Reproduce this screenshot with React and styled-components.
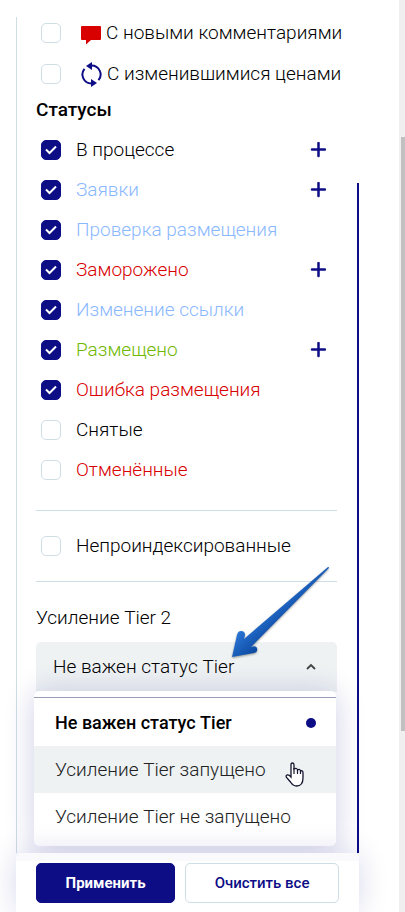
import { useState } from "react";
import styled, { createGlobalStyle } from "styled-components";

const NAVY = "#0d0d86";
const LINE = "#cfdde5";

const GlobalStyle = createGlobalStyle`
  * {
    box-sizing: border-box;
  }

  body {
    margin: 0;
    background: #ffffff;
    color: #000000;
    font-family: Roboto, "Liberation Sans", sans-serif;
    font-size: 19px;
    font-weight: 300;
    line-height: 24px;
  }

  button, select {
    font: inherit;
    color: inherit;
    cursor: pointer;
  }
`;

const Page = styled.div`
  display: flex;
  min-height: 100vh;
  overflow: hidden;
`;

const Sidebar = styled.aside`
  flex: 1;
  display: flex;
  flex-direction: column;
  min-width: 0;
  padding: 17px 40px 0 16px;
`;

const Panel = styled.div`
  flex: 1;
  display: flex;
  border-left: 1px solid ${LINE};
`;

const Filters = styled.form`
  flex: 1;
  min-width: 0;
  padding: 0 20px 0 19px;
`;

const PanelThumb = styled.div`
  width: 2px;
  margin-top: 166px;
  background: ${NAVY};
`;

const PageScroll = styled.div`
  width: 6px;
  padding-top: 137px;
  padding-left: 2px;
  background: #f0f0f0;
`;

const PageThumb = styled.div`
  height: 594px;
  background: #c1c1c1;
`;

const FlagList = styled.div`
  display: flex;
  flex-direction: column;
  gap: 9px;
`;

const Row = styled.div`
  display: flex;
  align-items: center;
  justify-content: space-between;
  height: ${(props) => (props.$compact ? "32px" : "40px")};
  padding: 0 11px 0 5px;
`;

const RowLabel = styled.label`
  display: flex;
  align-items: center;
  gap: ${(props) => (props.$wide ? "20px" : "15px")};
  color: ${(props) => props.$color || "#000000"};
  white-space: nowrap;
  cursor: pointer;
`;

const IconText = styled.span`
  display: flex;
  align-items: center;
  gap: 5px;
`;

const Tick = styled.span`
  display: grid;
  place-items: center;

  > * {
    grid-area: 1 / 1;
  }

  svg {
    pointer-events: none;
  }
`;

const TickInput = styled.input`
  appearance: none;
  width: 20px;
  height: 20px;
  margin: 0;
  border: 1px solid ${LINE};
  border-radius: 5px;
  background: #ffffff;
  cursor: pointer;

  &:checked {
    border-color: ${NAVY};
    background: ${NAVY};
  }
`;

const ExpandButton = styled.button`
  display: flex;
  padding: 0;
  border: 0;
  background: none;
`;

const Heading = styled.h2`
  margin: 8px 0;
  font-size: 19px;
  font-weight: 500;
  line-height: 24px;
`;

const Divider = styled.hr`
  height: 1px;
  margin: ${(props) => props.$top} 0 0;
  border: 0;
  background: ${LINE};
`;

const IndexBlock = styled.div`
  padding-top: 15px;
`;

const TierField = styled.div`
  position: relative;
  margin-top: 24px;
`;

const FieldLabel = styled.label`
  display: block;
  margin-bottom: 12px;
`;

const SelectBox = styled.div`
  display: grid;
  align-items: center;

  > * {
    grid-area: 1 / 1;
  }

  svg {
    justify-self: end;
    margin-right: 20px;
    pointer-events: none;
  }
`;

const Select = styled.select`
  appearance: none;
  width: 100%;
  height: 50px;
  padding: 0 40px 0 17px;
  border: 0;
  border-radius: 5px 5px 0 0;
  background: #eef2f3;
  outline: none;
`;

const Menu = styled.div`
  position: absolute;
  top: 85px;
  left: -2px;
  right: 1px;
  padding: 6px 0;
  border-radius: 5px;
  background: #ffffff;
  box-shadow: 0 2px 30px rgba(13, 13, 134, 0.2);
`;

const MenuLine = styled.div`
  height: 1px;
  margin-bottom: 1px;
  background: #999db5;
`;

const Option = styled.button`
  display: flex;
  align-items: center;
  justify-content: space-between;
  width: 100%;
  height: 47px;
  padding: 0 20px 0 21px;
  border: 0;
  background: ${(props) => (props.$hovered ? "#eef2f3" : "#ffffff")};
  color: ${(props) => (props.$selected ? "#000000" : "#222222")};
  font-size: ${(props) => (props.$selected ? "18px" : "19px")};
  font-weight: ${(props) => (props.$selected ? 500 : 300)};
  white-space: nowrap;
`;

const Dot = styled.span`
  width: 10px;
  height: 10px;
  border-radius: 50%;
  background: ${NAVY};
`;

const Pointer = styled.svg`
  position: absolute;
  top: 156px;
  right: 33px;
`;

const Arrow = styled.svg`
  position: absolute;
  top: -40px;
  right: 7px;
  filter: drop-shadow(0 1px 1px rgba(0, 0, 0, 0.4));
  pointer-events: none;
`;

const Footer = styled.footer`
  position: relative;
  display: flex;
  gap: 10px;
  padding: 10px 20px 9px;
  border-radius: 6px 6px 0 0;
  background: linear-gradient(#fafafd 8px, #ffffff 8px);
  box-shadow: 0 0 30px rgba(13, 13, 134, 0.16);
`;

const FooterButton = styled.button`
  flex: ${(props) => (props.$primary ? "139 1 0" : "154 1 0")};
  height: 40px;
  padding: 0;
  border: 1px solid ${(props) => (props.$primary ? NAVY : LINE)};
  border-radius: 5px;
  background: ${(props) => (props.$primary ? NAVY : "#ffffff")};
  color: ${(props) => (props.$primary ? "#ffffff" : NAVY)};
  font-size: 15px;
  font-weight: ${(props) => (props.$primary ? 700 : 500)};
  white-space: nowrap;
`;

const CommentIcon = () => (
  <svg width="20" height="24" viewBox="0 0 20 24" aria-hidden="true">
    <path d="M1 5h18a1 1 0 0 1 1 1v12a1 1 0 0 1-1 1h-9l-5 4.500V19H1a1 1 0 0 1-1-1V6a1 1 0 0 1 1-1z" fill="#d90000" />
  </svg>
);

const RefreshIcon = () => (
  <svg width="21" height="25" viewBox="0 0 21 25" aria-hidden="true">
    <g fill="none" stroke={NAVY} strokeWidth="2">
      <path d="M10.500 3.500A9 9 0 0 1 17.500 18.200" />
      <path d="M10.500 21.500A9 9 0 0 1 3.500 6.800" />
    </g>
    <path d="M11 0v8L5 4z" fill={NAVY} />
    <path d="M10 17v8l6-4z" fill={NAVY} />
  </svg>
);

const CheckIcon = () => (
  <svg width="12" height="10" viewBox="0 0 12 10" aria-hidden="true">
    <path d="M1 4.500 4.500 8 11 1.500" fill="none" stroke="#ffffff" strokeWidth="2" />
  </svg>
);

const PlusIcon = () => (
  <svg width="16" height="16" viewBox="0 0 16 16" aria-hidden="true">
    <path d="M8.500 1v13M2 7.500h13" stroke={NAVY} strokeWidth="2.500" strokeLinecap="round" />
  </svg>
);

const Checkbox = ({ id, checked, onChange }) => (
  <Tick>
    <TickInput type="checkbox" id={id} checked={checked} onChange={onChange} />
    {checked && <CheckIcon />}
  </Tick>
);

const flags = [
  { id: "comments", label: "С новыми комментариями", Icon: CommentIcon },
  { id: "prices", label: "С изменившимися ценами", Icon: RefreshIcon },
];

const statuses = [
  { id: "process", label: "В процессе", expandable: true },
  { id: "requests", label: "Заявки", color: "#8ab8ff", expandable: true },
  { id: "review", label: "Проверка размещения", color: "#8ab8ff" },
  { id: "frozen", label: "Заморожено", color: "#d90000", expandable: true },
  { id: "linkChange", label: "Изменение ссылки", color: "#8ab8ff" },
  { id: "placed", label: "Размещено", color: "#6fb800", expandable: true },
  { id: "error", label: "Ошибка размещения", color: "#d90000" },
  { id: "removed", label: "Снятые" },
  { id: "cancelled", label: "Отменённые", color: "#d90000" },
];

const tierOptions = [
  "Не важен статус Tier",
  "Усиление Tier запущено",
  "Усиление Tier не запущено",
];

const App = () => {
  const [checked, setChecked] = useState({
    process: true,
    requests: true,
    review: true,
    frozen: true,
    linkChange: true,
    placed: true,
    error: true,
  });
  const [tier, setTier] = useState(tierOptions[0]);
  const [hovered, setHovered] = useState(tierOptions[1]);

  const toggle = (id) => {
    setChecked((prevState) => ({ ...prevState, [id]: !prevState[id] }));
  };

  return (
    <>
      <GlobalStyle />
      <Page>
        <Sidebar>
          <Panel>
            <Filters id="filters" onSubmit={(e) => e.preventDefault()}>
              <FlagList>
                {flags.map(({ id, label, Icon }) => (
                  <Row key={id} $compact>
                    <RowLabel htmlFor={id} $wide>
                      <Checkbox id={id} checked={!!checked[id]} onChange={() => toggle(id)} />
                      <IconText>
                        <Icon />
                        {label}
                      </IconText>
                    </RowLabel>
                  </Row>
                ))}
              </FlagList>

              <Heading>Статусы</Heading>
              {statuses.map(({ id, label, color, expandable }) => (
                <Row key={id}>
                  <RowLabel htmlFor={id} $color={color}>
                    <Checkbox id={id} checked={!!checked[id]} onChange={() => toggle(id)} />
                    {label}
                  </RowLabel>
                  {expandable && (
                    <ExpandButton type="button" aria-label={label}>
                      <PlusIcon />
                    </ExpandButton>
                  )}
                </Row>
              ))}

              <Divider $top="20px" />
              <IndexBlock>
                <Row>
                  <RowLabel htmlFor="notIndexed">
                    <Checkbox id="notIndexed" checked={!!checked.notIndexed} onChange={() => toggle("notIndexed")} />
                    Непроиндексированные
                  </RowLabel>
                </Row>
              </IndexBlock>
              <Divider $top="15px" />

              <TierField>
                <FieldLabel htmlFor="tier">Усиление Tier 2</FieldLabel>
                <SelectBox>
                  <Select id="tier" value={tier} onChange={(e) => setTier(e.target.value)}>
                    {tierOptions.map((option) => (
                      <option key={option}>{option}</option>
                    ))}
                  </Select>
                  <svg width="12" height="8" viewBox="0 0 12 8" aria-hidden="true">
                    <path d="M2 6l4-4 4 4" fill="none" stroke="#444444" strokeWidth="1.800" />
                  </svg>
                </SelectBox>
                <Menu role="listbox">
                  <MenuLine />
                  {tierOptions.map((option) => (
                    <Option
                      key={option}
                      type="button"
                      role="option"
                      aria-selected={option === tier}
                      $selected={option === tier}
                      $hovered={option === hovered}
                      onMouseEnter={() => setHovered(option)}
                      onClick={() => setTier(option)}
                    >
                      {option}
                      {option === tier && <Dot />}
                    </Option>
                  ))}
                </Menu>
                <Arrow width="99" height="93" viewBox="0 0 99 93" aria-hidden="true">
                  <defs>
                    <linearGradient id="arrowFill" x1="0.400" y1="0.400" x2="0.600" y2="0.600">
                      <stop offset="0" stopColor="#2a74d4" />
                      <stop offset="1" stopColor="#0a48a0" />
                    </linearGradient>
                  </defs>
                  <path
                    d="M97 1 13 73 14 69Q14 65 10 65 7 65 6 69L1 91 23 87Q27 86 26 82 25 79 20 81L97 3Q99 1 97 1z"
                    fill="url(#arrowFill)"
                  />
                </Arrow>
                <Pointer width="19" height="25" viewBox="0 0 19 25" aria-hidden="true">
                  <path
                    d="M6 15V3Q6 1 7.500 1 9 1 9 3V7Q12 5.500 12.500 8 15 6.500 15.500 9 18 8 18 11V16Q18 24 11.500 24 8 24 5.500 20L1.500 15.500Q.5 13.500 2 13 4 12.500 6 15z"
                    fill="#ffffff"
                    stroke="#14142e"
                    strokeWidth="1.300"
                  />
                  <path d="M9 6v6M12.500 8v4M15.500 9v3" stroke="#14142e" strokeWidth="1.200" />
                </Pointer>
              </TierField>
            </Filters>
            <PanelThumb />
          </Panel>
          <Footer>
            <FooterButton type="submit" form="filters" $primary>
              Применить
            </FooterButton>
            <FooterButton type="button" onClick={() => setChecked({})}>
              Очистить все
            </FooterButton>
          </Footer>
        </Sidebar>
        <PageScroll>
          <PageThumb />
        </PageScroll>
      </Page>
    </>
  );
};

export default App;
